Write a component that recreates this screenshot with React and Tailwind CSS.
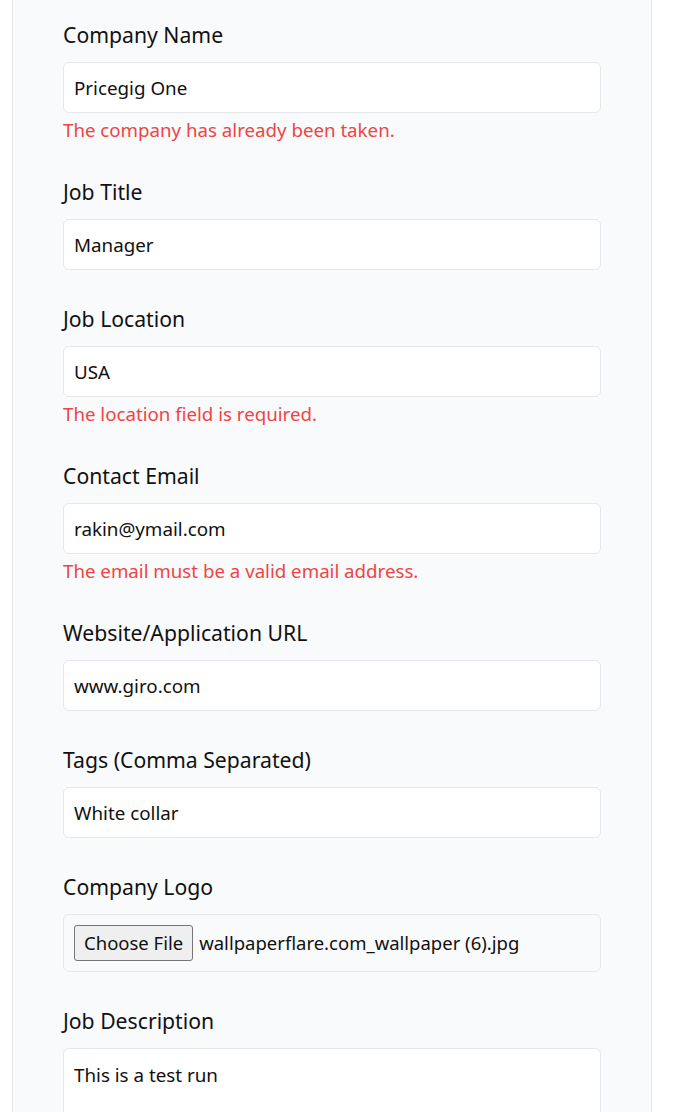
import React from "react";

const fields = [
  { label: "Company Name", value: "Pricegig One", error: "The company has already been taken." },
  { label: "Job Title", value: "Manager" },
  { label: "Job Location", value: "USA", error: "The location field is required." },
  { label: "Contact Email", value: "rakin@ymail.com", error: "The email must be a valid email address." },
  { label: "Website/Application URL", value: "www.giro.com" },
  { label: "Tags (Comma Separated)", value: "White collar" },
];

const font = { fontFamily: '"Segoe UI", "Noto Sans", "Open Sans", sans-serif' };

export default function App() {
  return (
    <div className="h-[1112px] overflow-hidden bg-white" style={font}>
      <div className="ml-[12px] w-[640px] min-h-[1112px] bg-[#f9fafb] border-x border-gray-200 px-[50px] pt-[21px]">
        {fields.map((f) => (
          <div key={f.label} className="mb-[35px]">
            <label className="block text-[21.2px] leading-[28px] text-[#111] mb-[13px]">{f.label}</label>
            <div className="h-[51px] bg-white border border-gray-200 rounded-md px-[10px] pt-[2px] flex items-center text-[18.8px] text-[#111]">
              {f.value}
            </div>
            {f.error && (
              <p className="mt-[4px] text-[18.7px] leading-[26px] text-[#ef4444]">{f.error}</p>
            )}
          </div>
        ))}

        <div className="mb-[35px]">
          <label className="block text-[21.2px] leading-[28px] text-[#111] mb-[13px]">Company Logo</label>
          <div className="h-[58px] bg-[#f9fafb] border border-gray-200 rounded-md px-[10px] flex items-center gap-[6px] text-[18.5px] text-[#111]">
            <button className="h-[36px] px-[9px] bg-[#efefef] border border-[#767676] rounded-[3px] text-[18.5px] text-[#111]">
              Choose File
            </button>
            <span>wallpaperflare.com_wallpaper (6).jpg</span>
          </div>
        </div>

        <div>
          <label className="block text-[21.2px] leading-[28px] text-[#111] mb-[13px]">Job Description</label>
          <div className="h-[120px] bg-white border border-gray-200 rounded-md px-[10px] pt-[12px] text-[18.8px] leading-[28px] text-[#111]">
            This is a test run
          </div>
        </div>
      </div>
    </div>
  );
}
